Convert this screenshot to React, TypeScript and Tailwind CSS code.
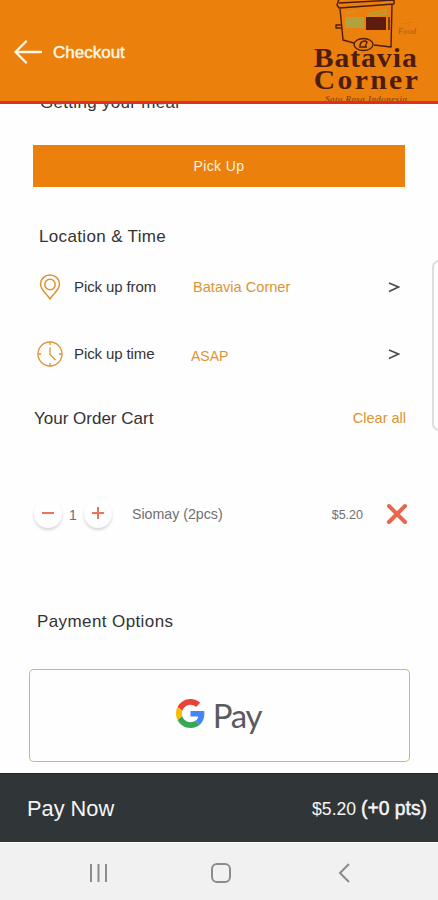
const BackArrow = () => (
  <svg className="h-6 w-7" viewBox="0 0 28 24" fill="none" stroke="#fff8e6" strokeWidth="2.4" strokeLinecap="round" strokeLinejoin="round">
    <path d="M12 1.5 1.5 12 12 22.500M1.500 12H27" />
  </svg>
);

const BataviaLogo = () => (
  <svg className="h-[101px] w-[126px]" viewBox="0 0 126 101" fill="none">
    <rect x="33" y="17" width="19" height="11" fill="#b3a13d" />
    <path d="m35 13 8-2M56 14l18-4v4l-18 2z" stroke="#b3a13d" strokeWidth="1.6" />
    <rect x="54" y="17" width="20" height="13" fill="#5c1c10" />
    <g stroke="#4d1c10" strokeWidth="1.4" strokeLinejoin="round">
      <path d="M27-1 25 5l2 3 55-4V-1M27 3l55-3" />
      <path d="M28 9l2 20 1 11 11 3M80 5l-1 42-17-2M77 17v13" />
      <path d="M30 25h-6v3h6" />
      <ellipse cx="51.500" cy="44.500" rx="9.500" ry="6" />
      <path d="M48 46c0-5 5-6 7-4l-2 5M47 47h8" />
    </g>
    <text x="86" y="34" fill="#a55a13" fontSize="8" fontStyle="italic" fontFamily="Liberation Serif, serif" textLength="18">Food</text>
    <path d="m89 24 12-2" stroke="#d87914" />
    <g fill="#4d1c10" fontFamily="Liberation Serif, serif">
      <g fontSize="26.500" fontWeight="bold" transform="scale(1.12 1)">
        <text x="1.500" y="67" textLength="92">Batavia</text>
        <text x="1.500" y="89" textLength="93">Corner</text>
      </g>
      <text x="13" y="102" fontSize="9" fontStyle="italic" opacity="0.75" textLength="82">Satu Rasa Indonesia</text>
    </g>
  </svg>
);

const PinIcon = () => (
  <svg className="h-[26px] w-[26px]" viewBox="0 0 26 26" fill="none" stroke="#dc9433" strokeWidth="1.5" strokeLinejoin="round">
    <path d="M13 25C10 20 3.500 16 3.500 10a9.500 9 0 0 1 19 0c0 6-6.500 10-9.500 15Z" />
    <circle cx="13" cy="10.500" r="5.200" />
  </svg>
);

const ClockIcon = () => (
  <svg className="h-[26px] w-[26px]" viewBox="0 0 26 26" fill="none" stroke="#dc9433" strokeWidth="1.3">
    <circle cx="13" cy="13" r="12" />
    <path d="M13 1v3M13 22v3M1 13h3M22 13h3M13 6.500v7l5.500 5.500" />
  </svg>
);

const GoogleLogo = () => (
  <svg className="h-[29px] w-[29px]" viewBox="0 0 48 48">
    <path fill="#EA4335" d="M24 9.500c3.540 0 6.710 1.220 9.210 3.600l6.850-6.850C35.900 2.380 30.470 0 24 0 14.620 0 6.510 5.380 2.560 13.220l7.980 6.190C12.430 13.720 17.740 9.500 24 9.500z" />
    <path fill="#4285F4" d="M46.980 24.550c0-1.570-.15-3.090-.38-4.550H24v9.020h12.940c-.58 2.960-2.260 5.480-4.780 7.180l7.730 6c4.510-4.180 7.090-10.360 7.090-17.650z" />
    <path fill="#FBBC05" d="M10.530 28.590c-.48-1.450-.76-2.990-.76-4.590s.27-3.140.76-4.590l-7.980-6.190C.92 16.460 0 20.120 0 24s.92 7.540 2.560 10.780l7.970-6.190z" />
    <path fill="#34A853" d="M24 48c6.480 0 11.930-2.130 15.890-5.810l-7.730-6c-2.150 1.450-4.920 2.300-8.160 2.300-6.260 0-11.570-4.220-13.470-9.910l-7.980 6.190C6.510 42.620 14.620 48 24 48z" />
  </svg>
);

const Caret = () => (
  <svg className="ml-auto h-3 w-3" viewBox="0 0 12 12" fill="none" stroke="#4a4a4a" strokeWidth="1.6">
    <path d="m1 2 9.500 4L1 10.500" />
  </svg>
);

const RoundButton = ({ plus = false }: { plus?: boolean }) => (
  <button className="flex h-7 w-7 items-center justify-center rounded-full bg-white shadow-[0_2px_3px_rgba(0,0,0,0.16)]">
    <svg className="mb-0.5 h-3 w-3" viewBox="0 0 12 12" stroke="#ea7358" strokeWidth="2">
      <path d={plus ? "M0 6h12M6 0v12" : "M0 6h12"} />
    </svg>
  </button>
);

const App = () => {
  return (
    <div className="relative flex h-[900px] w-[438px] flex-col overflow-hidden bg-[#fefefe] font-['Liberation_Sans',Arial,sans-serif] text-[#333]">
      <header className="flex h-[104px] shrink-0 items-start border-b-3 border-[#dc3022] bg-[#ec800c] pl-3.5">
        <div className="flex h-[104px] items-center gap-[11px]">
          <BackArrow />
          <h1 className="pt-0.5 text-[17px] text-[#fff8e6] [-webkit-text-stroke:0.4px_#fff8e6]">Checkout</h1>
        </div>
        <div className="ml-auto">
          <BataviaLogo />
        </div>
      </header>

      <main className="flex flex-1 flex-col">
        <div className="h-[41px] overflow-hidden pl-10">
          <h2 className="-mt-[11px] text-[17px] leading-5 tracking-[0.3px]">Getting your meal</h2>
        </div>
        <button className="mx-[33px] h-[42px] shrink-0 bg-[#ec800c] text-[14px] tracking-[0.4px] text-[#fff3dc]">Pick Up</button>
        <h2 className="mt-10 pl-[39px] text-[17px] leading-5 tracking-[0.35px]">Location &amp; Time</h2>

        <div className="mt-[26px] flex h-7 items-center pr-[38px] pl-[37px]">
          <PinIcon />
          <span className="ml-[11px] w-[119px] pt-px text-[15px] tracking-[-0.1px]">Pick up from</span>
          <span className="pt-0.5 text-[14.6px] text-[#dc9433]">Batavia Corner</span>
          <Caret />
        </div>
        <div className="mt-[39px] flex h-7 items-center pr-[38px] pl-[37px]">
          <ClockIcon />
          <span className="ml-[11px] w-[117px] text-[15px] tracking-[-0.1px]">Pick up time</span>
          <span className="pt-1 text-[14px] text-[#dc9433]">ASAP</span>
          <Caret />
        </div>

        <div className="mt-10 flex h-5 items-center justify-between pr-8 pl-[34px]">
          <h2 className="pt-px text-[17px]">Your Order Cart</h2>
          <button className="pt-0.5 text-[14.5px] text-[#dc9433]">Clear all</button>
        </div>

        <div className="mt-[72px] flex h-7 items-center pr-[30px] pl-[34px] text-[#707070]">
          <RoundButton />
          <span className="w-[22px] pt-0.5 text-center text-[14px]">1</span>
          <RoundButton plus />
          <span className="ml-5 pt-0.5 text-[14.2px]">Siomay (2pcs)</span>
          <span className="ml-auto pt-0.5 text-[12.5px]">$5.20</span>
          <svg className="ml-[23px] h-[22px] w-[22px]" viewBox="0 0 22 22" stroke="#e9654d" strokeWidth="4" strokeLinecap="round">
            <path d="m3 3 16 16M19 3 3 19" />
          </svg>
        </div>

        <h2 className="mt-[84px] pl-[37px] text-[17px] leading-5 tracking-[0.4px]">Payment Options</h2>
        <div className="mt-[37px] mr-7 ml-[29px] flex h-[93px] shrink-0 rounded-[5px] bg-[#dcb06a] p-px">
          <button className="flex flex-1 items-center justify-center gap-2 rounded-[4px] bg-[#fefefe] pr-0.5 pb-[5px]">
            <GoogleLogo />
            <span className="pt-[3px] font-['Lato',sans-serif] text-[33px] leading-9 tracking-[-1.2px] text-[#5a5b5e]">Pay</span>
          </button>
        </div>
      </main>

      <div className="flex h-[69px] shrink-0 items-center justify-between border-t border-[#202426] bg-[#303638] pt-0.5 pr-[11px] pl-[27px] text-[#f5f5f5]">
        <span className="text-[21.8px]">Pay Now</span>
        <span className="flex items-center gap-[5px]">
          <span className="text-[17.6px]">$5.20</span>
          <span className="text-[19.3px] [-webkit-text-stroke:0.5px_#f5f5f5]">(+0 pts)</span>
        </span>
      </div>
      <nav className="flex h-[58px] shrink-0 items-center border-t border-white bg-[#f1f1f1] pt-0.5 pl-[89px]">
        <svg className="h-5 w-5" viewBox="0 0 20 20" stroke="#8b8b8b" strokeWidth="2">
          <path d="M2 1v18M9.500 1v18M17 1v18" />
        </svg>
        <div className="ml-[102px] h-5 w-5 rounded-[6px] border-2 border-[#8b8b8b]" />
        <svg className="ml-[107px] h-5 w-3" viewBox="0 0 12 20" fill="none" stroke="#8b8b8b" strokeWidth="2">
          <path d="m11 1-9 9 9 9" />
        </svg>
      </nav>

      {/* edge panel handle */}
      <div className="absolute top-[260px] -right-2 h-[171px] w-3.5 rounded-[8px] border-2 border-[#dedede] bg-white" />
    </div>
  );
};

export default App;
